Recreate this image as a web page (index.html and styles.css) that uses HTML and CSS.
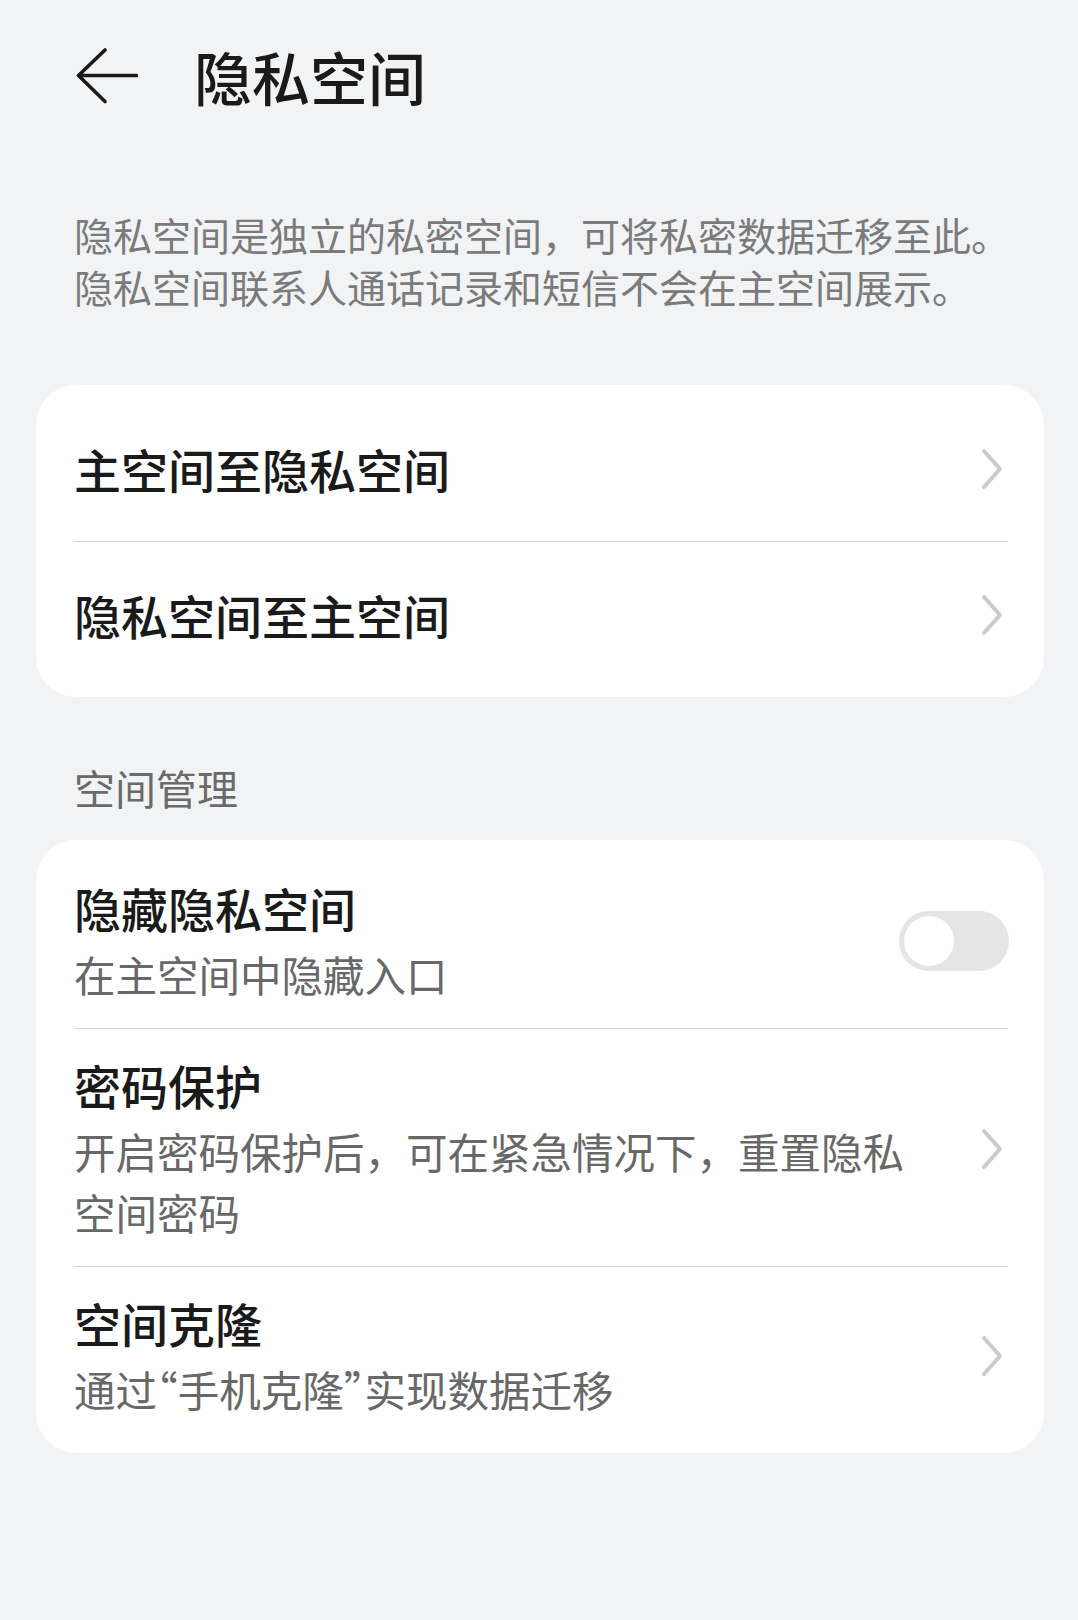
FILE: index.html
```html
<!DOCTYPE html>
<html lang="zh-CN">
<head>
    <meta charset="UTF-8">
    <meta name="viewport" content="width=device-width, initial-scale=1.0">
    <title>隐私空间</title>
    <link rel="stylesheet" href="styles.css">
</head>
<body>
    <header class="topbar">
        <svg class="back" width="62" height="56" viewBox="0 0 62 56">
            <path d="M29 2 L2.5 27.5 L29 53.5 M2.5 27.5 H60.5" fill="none" stroke="#1a1a1a" stroke-width="3.6" stroke-linecap="round" stroke-linejoin="round"/>
        </svg>
        <h1 class="title">隐私空间</h1>
    </header>

    <p class="intro">隐私空间是独立的私密空间，可将私密数据迁移至此。<br>隐私空间联系人通话记录和短信不会在主空间展示。</p>

    <div class="card">
        <div class="row single">
            <div class="row-text">
                <div class="row-title">主空间至隐私空间</div>
            </div>
            <svg class="chevron" width="22" height="42" viewBox="0 0 22 42"><path d="M3 3 L19 21 L3 39"/></svg>
        </div>
        <div class="row single">
            <div class="row-text">
                <div class="row-title">隐私空间至主空间</div>
            </div>
            <svg class="chevron" width="22" height="42" viewBox="0 0 22 42"><path d="M3 3 L19 21 L3 39"/></svg>
        </div>
    </div>

    <h2 class="section">空间管理</h2>

    <div class="card">
        <div class="row">
            <div class="row-text">
                <div class="row-title">隐藏隐私空间</div>
                <div class="row-sub">在主空间中隐藏入口</div>
            </div>
            <span class="switch"><span class="knob"></span></span>
        </div>
        <div class="row">
            <div class="row-text">
                <div class="row-title">密码保护</div>
                <div class="row-sub">开启密码保护后，可在紧急情况下，重置隐私空间密码</div>
            </div>
            <svg class="chevron" width="22" height="42" viewBox="0 0 22 42"><path d="M3 3 L19 21 L3 39"/></svg>
        </div>
        <div class="row">
            <div class="row-text">
                <div class="row-title">空间克隆</div>
                <div class="row-sub">通过<span class="quote">“</span>手机克隆<span class="quote">”</span>实现数据迁移</div>
            </div>
            <svg class="chevron" width="22" height="42" viewBox="0 0 22 42"><path d="M3 3 L19 21 L3 39"/></svg>
        </div>
    </div>
</body>
</html>
```

FILE: styles.css
```css
body {
    margin: 0;
    padding: 0 34px 0 36px;
    background-color: #f1f3f5;
    font-family: "Noto Sans CJK SC", "Noto Sans", sans-serif;
    color: #1a1a1a;
}
.topbar {
    display: flex;
    align-items: center;
    height: 151px;
    padding-left: 40px;
}
.back {
    display: block;
    flex: none;
}
.title {
    margin: 0 0 0 56px;
    font-size: 58px;
    font-weight: 500;
    line-height: 70px;
}
.intro {
    margin: 57px 0 0;
    padding: 0 0 0 38px;
    font-size: 39px;
    line-height: 52px;
    color: #7b7b7b;
}
.card {
    margin-top: 73px;
    padding: 12px 0 10px;
    background-color: #fff;
    border-radius: 40px;
}
.row {
    display: flex;
    align-items: center;
    margin: 0 36px 0 38px;
    padding: 25px 0 23px;
    border-bottom: 1px solid #d4d4d4;
}
.row:last-child {
    border-bottom: none;
}
.row.single {
    height: 145px;
    padding: 0;
    box-sizing: border-box;
}
.row-text {
    flex: 1;
    margin-right: 47px;
}
.row-title {
    font-size: 47px;
    font-weight: 500;
    line-height: 62px;
}
.row-sub {
    margin-top: 5px;
    font-size: 41.5px;
    line-height: 61px;
    color: #686868;
}
/* half-width curly quotes inside CJK text */
.quote {
    font-feature-settings: "halt";
}
.chevron {
    flex: none;
    margin-right: 5px;
}
.chevron path {
    fill: none;
    stroke: #cbcbcb;
    stroke-width: 4;
    stroke-linecap: round;
    stroke-linejoin: round;
}
.section {
    margin: 62px 0 0;
    padding-left: 38px;
    font-size: 41px;
    font-weight: normal;
    line-height: 56px;
    color: #6a6a6a;
}
.section + .card {
    margin-top: 25px;
}
.switch {
    flex: none;
    display: flex;
    align-items: center;
    width: 110px;
    height: 60px;
    padding: 0 5px;
    box-sizing: border-box;
    border-radius: 30px;
    background-color: #e5e5e5;
    margin-right: -1px;
}
.knob {
    width: 50px;
    height: 50px;
    border-radius: 50%;
    background-color: #fff;
}
```
